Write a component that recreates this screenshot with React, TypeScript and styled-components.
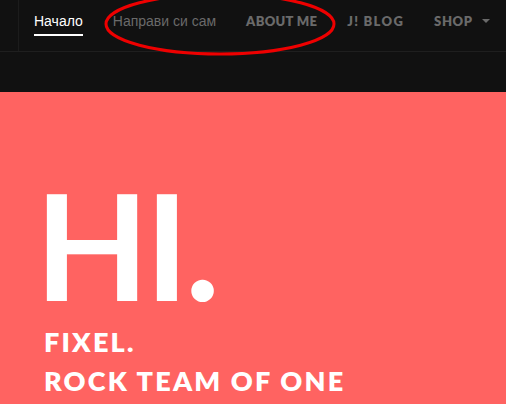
import React from "react";
import styled, { createGlobalStyle } from "styled-components";

const Global = createGlobalStyle`
  html, body { margin: 0; padding: 0; background: #111111; }
  body { width: 506px; height: 404px; overflow: hidden; }
`;

const Page = styled.div`
  position: relative;
  width: 506px;
  height: 404px;
  overflow: hidden;
  background: #111111;
`;

const NavBar = styled.nav`
  display: flex;
  align-items: stretch;
  height: 51px;
  border-bottom: 1px solid #1f1f1f;
`;

const Brand = styled.div`
  width: 18px;
  border-right: 1px solid #1c1c1c;
`;

const Menu = styled.ul`
  display: flex;
  align-items: flex-start;
  list-style: none;
  margin: 0;
  padding: 0 0 0 15px;
  gap: 30px;
`;

const Item = styled.li<{ $active?: boolean; $caps?: boolean; $spacing?: number }>`
  display: flex;
  align-items: center;
  box-sizing: border-box;
  height: 36px;
  padding-top: 8px;
  font-family: ${(p) => (p.$caps ? `"Lato", "Open Sans", sans-serif` : `"Liberation Sans", Arial, sans-serif`)};
  font-weight: ${(p) => (p.$caps ? 800 : 400)};
  font-size: ${(p) => (p.$caps ? "13px" : "14px")};
  letter-spacing: ${(p) => p.$spacing ?? 0}px;
  color: ${(p) => (p.$active ? "#ffffff" : "#6a6a6a")};
  border-bottom: 2px solid ${(p) => (p.$active ? "#ffffff" : "transparent")};
`;

const Caret = styled.span`
  display: inline-block;
  margin-left: 9px;
  width: 0;
  height: 0;
  border-left: 4px solid transparent;
  border-right: 4px solid transparent;
  border-top: 4px solid #6a6a6a;
`;

const Band = styled.div`
  height: 40px;
  background: #111111;
`;

const Hero = styled.section`
  background: #ff6361;
  height: 312px;
  padding: 88px 0 0 35px;
  box-sizing: border-box;
  color: #ffffff;
`;

const Big = styled.h1`
  margin: 0;
  font-family: "Lato", "Open Sans", sans-serif;
  font-weight: 700;
  font-size: 148px;
  line-height: 128px;
  letter-spacing: -4px;
`;

const Sub = styled.p`
  margin: 14px 0 0 9px;
  font-family: "Lato", "Open Sans", sans-serif;
  font-weight: 800;
  font-size: 27px;
  line-height: 39px;
  letter-spacing: 2.2px;
`;

const Annotation = styled.svg`
  position: absolute;
  left: 0;
  top: 0;
  pointer-events: none;
`;

export default function App() {
  return (
    <Page>
      <Global />
      <NavBar>
        <Brand />
        <Menu>
          <Item $active>Начало</Item>
          <Item>Направи си сам</Item>
          <Item $caps $spacing={0.3}>ABOUT ME</Item>
          <Item $caps $spacing={1.3}>J! BLOG</Item>
          <Item $caps $spacing={0.6}>
            SHOP<Caret />
          </Item>
        </Menu>
      </NavBar>
      <Band />
      <Hero>
        <Big>HI.</Big>
        <Sub>
          FIXEL.
          <br />
          ROCK TEAM OF ONE
        </Sub>
      </Hero>
      <Annotation width="506" height="80" viewBox="0 0 506 80">
        <ellipse cx="220" cy="24" rx="114" ry="30" fill="none" stroke="#ee0000" strokeWidth="3" />
      </Annotation>
    </Page>
  );
}
